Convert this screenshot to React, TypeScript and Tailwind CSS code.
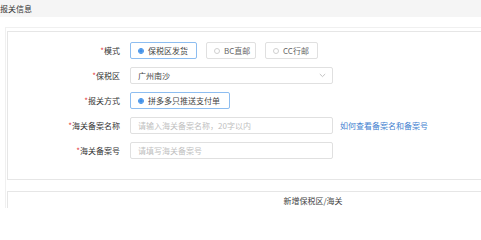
import React from "react";

const font = { fontFamily: '"Noto Sans CJK SC", "Noto Sans", sans-serif' };

function Label({ text }: { text: string }) {
  return (
    <div className="w-[112px] shrink-0 text-right text-[8px] leading-[17px] text-[#333]">
      <span className="text-[#e4393c]">*</span>
      {text}
    </div>
  );
}

function Radio({ label, checked, w }: { label: string; checked?: boolean; w: string }) {
  return (
    <div
      className={`${w} h-[17px] flex items-center pl-[7px] rounded-[2px] border ${
        checked ? "border-[#8dbdf0]" : "border-[#e0e0e0]"
      }`}
    >
      <span
        className={`w-[6px] h-[6px] rounded-full border flex items-center justify-center ${
          checked ? "border-[#3d8ee8]" : "border-[#d0d0d0]"
        }`}
      >
        {checked && <span className="w-[4px] h-[4px] rounded-full bg-[#3d8ee8]" />}
      </span>
      <span className={`ml-[4px] text-[8px] leading-none ${checked ? "text-[#444]" : "text-[#666]"}`}>{label}</span>
    </div>
  );
}

export default function App() {
  return (
    <div className="w-[481px] h-[208px] overflow-hidden bg-white relative" style={font}>
      <div className="h-[17px] bg-[#f5f5f5] flex items-center text-[8px] text-[#333]">报关信息</div>
      <div className="h-[10px]" />
      <div className="border-t border-[#f0f0f0] border-l ml-[5px] pt-[3px] pl-[1px]">
        <div className="w-[612px] h-[149px] border border-[#e6e6e6] pt-[10px] flex flex-col gap-[8px]">
          <div className="flex items-center">
            <Label text="模式" />
            <div className="ml-[10px] flex gap-[9px]">
              <Radio label="保税区发货" checked w="w-[67px]" />
              <Radio label="BC直邮" w="w-[50px]" />
              <Radio label="CC行邮" w="w-[53px]" />
            </div>
          </div>
          <div className="flex items-center">
            <Label text="保税区" />
            <div className="ml-[10px] w-[203px] h-[17px] border border-[#e0e0e0] rounded-[2px] flex items-center justify-between pl-[7px] pr-[6px]">
              <span className="text-[8px] leading-none text-[#444]">广州南沙</span>
              <svg width="7" height="5" viewBox="0 0 7 5" fill="none">
                <path d="M0.8 1 L3.5 3.6 L6.2 1" stroke="#bbb" strokeWidth="0.9" />
              </svg>
            </div>
          </div>
          <div className="flex items-center">
            <Label text="报关方式" />
            <div className="ml-[10px]">
              <Radio label="拼多多只推送支付单" checked w="w-[100px]" />
            </div>
          </div>
          <div className="flex items-center">
            <Label text="海关备案名称" />
            <div className="ml-[10px] w-[203px] h-[17px] border border-[#e0e0e0] rounded-[2px] flex items-center pl-[7px]">
              <span className="text-[8px] leading-none text-[#c0c0c0]">请输入海关备案名称，20字以内</span>
            </div>
            <span className="ml-[7px] text-[8px] leading-none text-[#3f7fd0]">如何查看备案名和备案号</span>
          </div>
          <div className="flex items-center">
            <Label text="海关备案号" />
            <div className="ml-[10px] w-[203px] h-[17px] border border-[#e0e0e0] rounded-[2px] flex items-center pl-[7px]">
              <span className="text-[8px] leading-none text-[#c0c0c0]">请填写海关备案号</span>
            </div>
          </div>
        </div>
        <div className="h-[11px]" />
        <div className="w-[612px] h-[20px] border border-[#e6e6e6] flex items-center justify-center text-[8px] text-[#444]">
          新增保税区/海关
        </div>
      </div>
    </div>
  );
}
